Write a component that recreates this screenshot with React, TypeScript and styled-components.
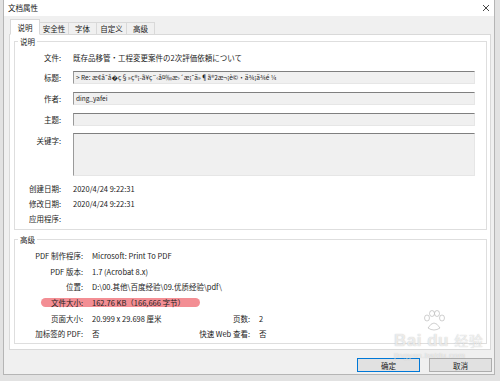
import React, { FC } from "react";
import styled, { createGlobalStyle } from "styled-components";

const Global = createGlobalStyle`
  html, body {
    margin: 0;
    padding: 0;
    background: #dedede;
  }
  body {
    font-family: "Noto Sans CJK SC", "Noto Sans", sans-serif;
    font-size: 7.5px;
    color: #1a1a1a;
  }
`;

const Screen = styled.div`
  width: 500px;
  height: 381px;
  background: #e2e2e2;
  position: relative;
  overflow: hidden;
`;

const Window = styled.div`
  margin-left: 3px;
  width: 492px;
  height: 375px;
  background: #f0f0f0;
  border: 1px solid #b5b5b5;
  border-top: none;
  box-sizing: border-box;
  display: flex;
  flex-direction: column;
`;

const TitleBar = styled.div`
  height: 16px;
  background: #fff;
  display: flex;
  align-items: center;
  justify-content: space-between;
  padding: 0 4px 0 4px;
  font-size: 7.5px;
  line-height: 16px;
  color: #111;
`;

const TabBar = styled.div`
  display: flex;
  align-items: flex-end;
  height: 17px;
  margin: 1px 0 0 6px;
  position: relative;
  z-index: 1;
`;

const Tab = styled.div<{ $active?: boolean; $w: number }>`
  width: ${(p) => p.$w}px;
  height: ${(p) => (p.$active ? 16 : 12)}px;
  box-sizing: border-box;
  border: 1px solid #d9d9d9;
  border-bottom: ${(p) => (p.$active ? "1px solid #fff" : "none")};
  margin-left: ${(p) => (p.$active ? 0 : -1)}px;
  background: ${(p) => (p.$active ? "#fff" : "#f0f0f0")};
  display: flex;
  align-items: center;
  justify-content: center;
  font-size: 7.5px;
  line-height: 11px;
  margin-bottom: ${(p) => (p.$active ? -1 : 0)}px;
`;

const Panel = styled.div`
  margin: 0 3px 0 5px;
  height: 316px;
  background: #fff;
  border: 1px solid #d9d9d9;
  box-sizing: border-box;
  padding: 1px 3px 0 4px;
  display: flex;
  flex-direction: column;
  gap: 4px;
`;

const Group = styled.fieldset<{ $pb?: number }>`
  margin: 0;
  padding: 0 0 ${(p) => p.$pb ?? 0}px 0;
  border: 1px solid #dedede;
  min-width: 0;
`;

const Legend = styled.legend`
  padding: 0 2px;
  margin-left: 3px;
  font-size: 7.5px;
  line-height: 11px;
`;

const Row = styled.div<{ $mt?: number; $h: number; $top?: boolean }>`
  display: grid;
  grid-template-columns: 46px 402px;
  column-gap: 12px;
  align-items: ${(p) => (p.$top ? "start" : "center")};
  height: ${(p) => p.$h}px;
  margin-top: ${(p) => p.$mt ?? 0}px;
  line-height: 15px;
`;

const Label = styled.div<{ $pt?: number }>`
  text-align: right;
  white-space: nowrap;
  padding-top: ${(p) => p.$pt ?? 0}px;
`;

const Value = styled.div`
  white-space: nowrap;
  font-size: 7.5px;
`;

const Box = styled.div<{ $h: number }>`
  height: ${(p) => p.$h}px;
  box-sizing: border-box;
  background: #f0f0f0;
  border-top: 1px solid #7f7f7f;
  border-left: 1px solid #9a9a9a;
  border-right: 1px solid #e6e6e6;
  border-bottom: 1px solid #e6e6e6;
  padding: 0 2px;
  font-size: 6.5px;
  line-height: 11px;
  white-space: nowrap;
  overflow: hidden;
  color: #222;
`;

const AdvRow = styled.div<{ $mt?: number }>`
  display: grid;
  grid-template-columns: 68px 92px 57px 1fr;
  column-gap: 9px;
  height: 15.6px;
  margin-top: ${(p) => p.$mt ?? 0}px;
  align-items: center;
  line-height: 15px;
  color: #222;
  position: relative;
`;

const Wide = styled.div`
  grid-column: 2 / -1;
  white-space: nowrap;
`;

const Highlight = styled.div`
  position: absolute;
  left: 26px;
  top: 3.5px;
  width: 159px;
  height: 9px;
  border-radius: 5px;
  background: rgba(240, 110, 118, 0.78);
  z-index: 0;
`;

const Above = styled.div`
  position: relative;
  z-index: 1;
`;

const Buttons = styled.div`
  display: flex;
  justify-content: flex-end;
  gap: 9px;
  margin: 8px 2px 0 0;
`;

const Button = styled.div<{ $primary?: boolean }>`
  width: 63px;
  height: 14px;
  box-sizing: border-box;
  background: #e1e1e1;
  border: ${(p) => (p.$primary ? "1.5px solid #0078d7" : "1px solid #adadad")};
  display: flex;
  align-items: center;
  justify-content: center;
  font-size: 7.5px;
`;

const Watermark = styled.div`
  position: absolute;
  left: 394px;
  top: 310px;
  width: 90px;
  color: rgba(255, 255, 255, 0.7);
  text-shadow: 0 0 1px rgba(130, 130, 130, 0.55);
  font-family: "Liberation Sans", sans-serif;
  pointer-events: none;
  z-index: 5;
`;

const Brand = styled.div`
  font-size: 17px;
  font-weight: bold;
  line-height: 18px;
  margin-top: 21px;
  letter-spacing: 0.5px;
  span {
    font-family: "Noto Sans CJK SC", sans-serif;
    font-weight: normal;
    font-size: 14px;
  }
`;

const Site = styled.div`
  font-size: 8px;
  line-height: 10px;
  margin-top: 1px;
  letter-spacing: 0.4px;
`;

const Paw = styled.svg`
  position: absolute;
  left: 28px;
  top: 0;
`;

const Close: FC = () => (
  <svg width="8" height="8" viewBox="0 0 8 8">
    <path d="M1 1L7 7M7 1L1 7" stroke="#333" strokeWidth="0.9" />
  </svg>
);

const App: FC = () => {
  return (
    <>
      <Global />
      <Screen>
        <Window>
          <TitleBar>
            <span>文档属性</span>
            <Close />
          </TitleBar>
          <TabBar>
            <Tab $active $w={30}>说明</Tab>
            <Tab $w={30}>安全性</Tab>
            <Tab $w={29}>字体</Tab>
            <Tab $w={31}>自定义</Tab>
            <Tab $w={29}>高级</Tab>
          </TabBar>
          <Panel>
            <Group $pb={3}>
              <Legend>说明</Legend>
              <Row $h={16} $mt={2}>
                <Label>文件:</Label>
                <Value>既存品移管・工程変更案件の2次評価依頼について</Value>
              </Row>
              <Row $h={13} $mt={5}>
                <Label>标题:</Label>
                <Box $h={13}>
                  &gt; Re: æ¢å­˜å�ç§»ç®¡-ã¥ç¨‹å¤‰æ›´æ¡ˆä»¶ã®2æ¬¡è©•ä¾¡ä¾é ¼
                </Box>
              </Row>
              <Row $h={13} $mt={8}>
                <Label>作者:</Label>
                <Box $h={13}>ding_yafei</Box>
              </Row>
              <Row $h={13} $mt={8}>
                <Label>主题:</Label>
                <Box $h={13} />
              </Row>
              <Row $h={43} $mt={8} $top>
                <Label $pt={-1}>关键字:</Label>
                <Box $h={43} />
              </Row>
              <Row $h={15} $mt={5}>
                <Label>创建日期:</Label>
                <Value>2020/4/24 9:22:31</Value>
              </Row>
              <Row $h={15}>
                <Label>修改日期:</Label>
                <Value>2020/4/24 9:22:31</Value>
              </Row>
              <Row $h={15}>
                <Label>应用程序:</Label>
                <Value />
              </Row>
            </Group>
            <Group $pb={1}>
              <Legend>高级</Legend>
              <AdvRow $mt={3}>
                <Label>PDF 制作程序:</Label>
                <Wide>Microsoft: Print To PDF</Wide>
              </AdvRow>
              <AdvRow>
                <Label>PDF 版本:</Label>
                <Wide>1.7 (Acrobat 8.x)</Wide>
              </AdvRow>
              <AdvRow>
                <Label>位置:</Label>
                <Wide>D:\00.其他\百度经验\09.优质经验\pdf\</Wide>
              </AdvRow>
              <AdvRow>
                <Highlight />
                <Above as={Label}>文件大小:</Above>
                <Above as={Wide}>162.76 KB（166,666 字节）</Above>
              </AdvRow>
              <AdvRow>
                <Label>页面大小:</Label>
                <Value>20.999 x 29.698 厘米</Value>
                <Label>页数:</Label>
                <Value>2</Value>
              </AdvRow>
              <AdvRow>
                <Label>加标签的 PDF:</Label>
                <Value>否</Value>
                <Label>快速 Web 查看:</Label>
                <Value>否</Value>
              </AdvRow>
            </Group>
          </Panel>
          <Buttons>
            <Button $primary>确定</Button>
            <Button>取消</Button>
          </Buttons>
        </Window>
        <Watermark>
          <Paw width="24" height="22" viewBox="0 0 24 22">
            <g fill="rgba(255,255,255,0.7)" stroke="rgba(150,150,150,0.45)" strokeWidth="1">
              <ellipse cx="5" cy="8" rx="2.5" ry="3" />
              <ellipse cx="10" cy="3.5" rx="2.5" ry="3" />
              <ellipse cx="15" cy="3.5" rx="2.5" ry="3" />
              <ellipse cx="20" cy="8" rx="2.5" ry="3" />
              <path d="M6 18 Q12 8 18 18 Q12 22 6 18Z" />
            </g>
          </Paw>
          <Brand>
            Bai du <span>经验</span>
          </Brand>
          <Site>jingyan.baidu.com</Site>
        </Watermark>
      </Screen>
    </>
  );
};

export default App;
